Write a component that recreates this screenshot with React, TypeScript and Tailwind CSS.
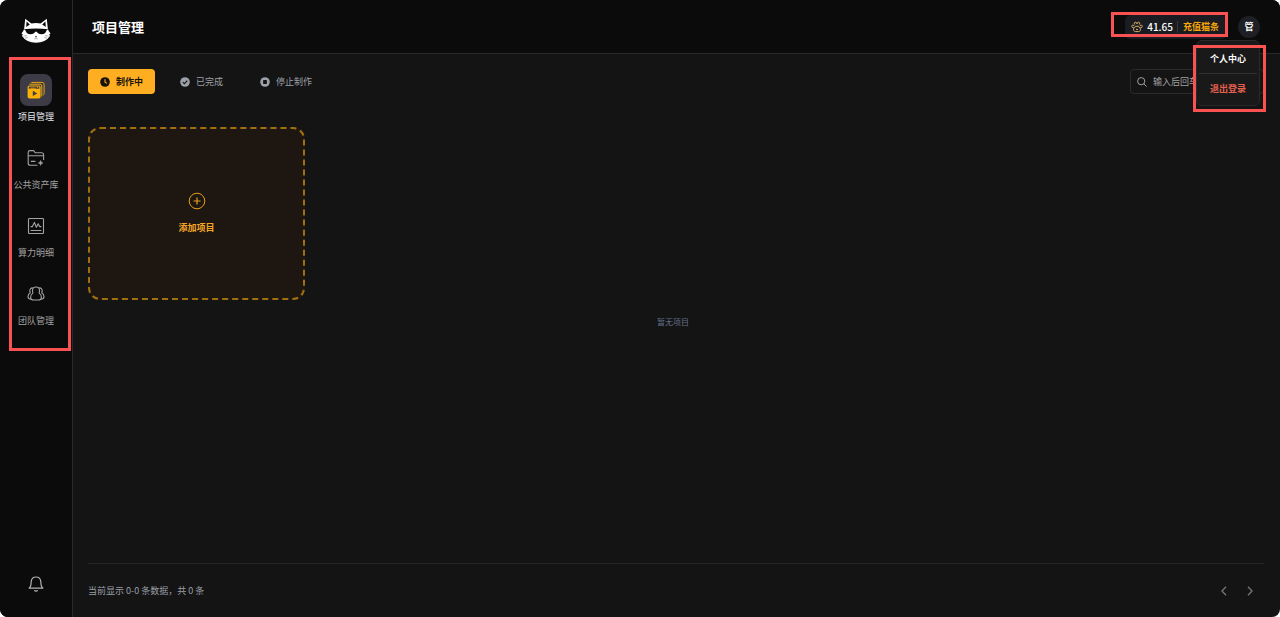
import { useState } from "react";
import type { ReactNode } from "react";

type NavItem = {
  key: string;
  label: string;
  icon: ReactNode;
};

function CatLogo() {
  return (
    <svg width="30" height="26" viewBox="0 0 30 26" fill="none" aria-hidden="true">
      <path
        d="M4.2.8 10.4 5.6Q15 4.6 19.600 5.600L25.800.8 26.800 10.500Q27.200 13 29.600 15.400L28.200 16.200 29 18Q24.500 24.800 15 24.800 5.500 24.800 1 18L1.800 16.200.4 15.400Q2.800 13 3.200 10.500Z"
        fill="#fff"
      />
      <path d="M5.600 3.600 8.800 6.400 5.200 9ZM24.400 3.600 21.200 6.400 24.800 9Z" fill="#0b0b0b" />
      <path
        d="M2.800 11.200Q15 9.600 27.200 11.200L25.400 12.600Q24.800 16.200 20.600 16.200 16.800 16 15.800 13.800H14.200Q13.200 16 9.400 16.200 5.200 16.200 4.600 12.600Z"
        fill="#0b0b0b"
      />
      <path d="M14 18h2l-1 1.200Z" fill="#0b0b0b" />
      <path d="M15 19v1.200M13.400 21q1 .2 1.600-.8.6 1 1.600.8" stroke="#555" strokeWidth=".5" />
      <path d="M2.400 18.200 6 17.600M4 20.200l3-1M27.600 18.200 24 17.600M26 20.200l-3-1" stroke="#666" strokeWidth=".5" />
    </svg>
  );
}

function ProjectIcon() {
  return (
    <svg width="18" height="18" viewBox="0 0 18 18" fill="none" aria-hidden="true">
      <path d="M4.400 1.400h10.800q1.900 0 1.900 1.900v9.200q0 1-1 1.600" stroke="#e6a410" />
      <path d="M2.400 3.200h10.600q1.800 0 1.800 1.800v10.400" stroke="#e6a410" />
      <rect x=".6" y="4.400" width="13" height="13.200" rx="1.800" fill="#fab005" />
      <rect x="1.800" y="5.600" width="10.600" height="2.200" rx=".5" fill="#3d3c46" />
      <path d="M3.200 7.200h5.400M10 6.900l1.200-.8" stroke="#fab005" strokeWidth=".8" />
      <path d="M5.800 9.800v5.200l4.400-2.600Z" fill="#3d3c46" />
    </svg>
  );
}

function AssetIcon() {
  return (
    <svg width="18" height="18" viewBox="0 0 18 18" fill="none" stroke="#a3a3a3" strokeWidth="1.1" aria-hidden="true">
      <path d="M10.400 16.200H3.200q-2 0-2-2V3.400q0-1.800 1.800-1.800h3q.8 0 1.200.7l.9 1.500h6.500q2 0 2 2V11" />
      <path d="M1.200 6.800h15.400M3.800 12.400h4.600" />
      <path d="M13.600 11.400q.3 2.200 2.400 2.500-2.100.3-2.400 2.500-.3-2.200-2.400-2.500 2.100-.3 2.400-2.500Z" fill="#a3a3a3" strokeWidth=".5" />
    </svg>
  );
}

function UsageIcon() {
  return (
    <svg width="18" height="18" viewBox="0 0 18 18" fill="none" stroke="#a3a3a3" strokeWidth="1.1" aria-hidden="true">
      <rect x="1.500" y="1.500" width="15" height="15" rx=".8" />
      <path d="M3.600 9.600h1.800L7.400 5.400l2 4.800 1.800-3.400 1.400 2.800h1.800M3.600 13.500h10.800" strokeLinejoin="round" />
    </svg>
  );
}

function TeamIcon() {
  return (
    <svg width="18" height="18" viewBox="0 0 18 18" fill="none" stroke="#a3a3a3" strokeWidth="1.1" strokeLinejoin="round" aria-hidden="true">
      <path d="M9 2c2.100 0 3.500 1.500 3.500 3.500 0 1.300-.4 2-.4 2.600C13.500 9 14.400 10.500 14.400 12.200c0 2-1.200 2.800-3 2.800H6.600c-1.800 0-3-.8-3-2.800C3.600 10.500 4.500 9 5.900 8.100 5.900 7.500 5.500 6.800 5.500 5.500 5.500 3.500 6.900 2 9 2Z" />
      <path d="M5.800 2.900C4 2.600 2.800 4 2.800 5.700c0 1 .4 1.500.4 2.100C1.800 8.800 1 10.200 1 11.700c0 1.700 1.100 2.500 3.200 2.500M12.200 2.900c1.800-.3 3 1.100 3 2.800 0 1-.4 1.500-.4 2.100 1.400 1 2.200 2.400 2.200 3.900 0 1.700-1.100 2.500-3.200 2.500" />
    </svg>
  );
}

function BellIcon() {
  return (
    <svg width="16" height="18" viewBox="0 0 16 18" fill="none" stroke="#b4b4b4" strokeWidth="1.200" strokeLinejoin="round" aria-hidden="true">
      <path d="M8 2q4.400 0 4.800 4.600l.3 3.400q.2 1.400 1.700 3.200H1.200q1.500-1.800 1.700-3.200l.3-3.400Q3.600 2 8 2Z" />
      <path d="M6.200 15.600q1.800 1.200 3.600 0" />
    </svg>
  );
}

function PawIcon() {
  return (
    <svg width="12" height="12" viewBox="0 0 12 12" fill="none" stroke="#d8b36a" aria-hidden="true">
      <path d="M4.200 3.600C2.900 3.200 3 1.200 4.400 1.200 5.300 1.200 6 2 6 3c0-1 .7-1.800 1.600-1.800C9 1.200 9.100 3.200 7.800 3.600" />
      <path d="M2.800 6.800C1.400 6.900.4 5.800.8 4.800 1.300 3.700 3 4 3.500 5.200M9.200 6.800c1.400.1 2.400-1 2-2C10.700 3.700 9 4 8.500 5.200" />
      <path d="M6 5.200c1.700 0 3.500 1.700 3.500 3.400 0 1.300-1.100 2-2.100 2H4.600c-1 0-2.100-.7-2.100-2C2.500 6.900 4.300 5.200 6 5.200Z" />
      <path d="M5 8.400h2" />
    </svg>
  );
}

const navItems: NavItem[] = [
  { key: "project", label: "项目管理", icon: <ProjectIcon /> },
  { key: "asset", label: "公共资产库", icon: <AssetIcon /> },
  { key: "usage", label: "算力明细", icon: <UsageIcon /> },
  { key: "team", label: "团队管理", icon: <TeamIcon /> },
];

const tabs = [
  {
    key: "doing",
    label: "制作中",
    icon: (
      <svg width="10" height="10" viewBox="0 0 10 10" fill="none" aria-hidden="true">
        <circle cx="5" cy="5" r="4.800" fill="#17120a" />
        <path d="M5 2.200V5.200l2 1.200" stroke="#ffae22" strokeWidth="1.100" />
      </svg>
    ),
  },
  {
    key: "done",
    label: "已完成",
    icon: (
      <svg width="10" height="10" viewBox="0 0 10 10" fill="none" aria-hidden="true">
        <circle cx="5" cy="5" r="4.800" fill="#9ca0a8" />
        <path d="m2.800 5.200 1.600 1.500 2.900-3" stroke="#141414" strokeWidth="1.100" />
      </svg>
    ),
  },
  {
    key: "stopped",
    label: "停止制作",
    icon: (
      <svg width="10" height="10" viewBox="0 0 10 10" aria-hidden="true">
        <circle cx="5" cy="5" r="4.800" fill="#9ca0a8" />
        <rect x="3.100" y="3.100" width="3.800" height="3.800" rx=".6" fill="#141414" />
      </svg>
    ),
  },
];

export default function App() {
  const [nav, setNav] = useState("project");
  const [tab, setTab] = useState("doing");
  const [keyword, setKeyword] = useState("");

  return (
    <div className="min-h-screen flex bg-white font-['Noto_Sans_CJK_SC',sans-serif] text-[9px]">
      <div className="relative flex flex-1 rounded-lg overflow-hidden bg-[#141414]">
        <aside className="relative w-[73px] shrink-0 flex flex-col items-center bg-[#0b0b0b] border-r border-[#2a2a2e]">
          <a href="#" aria-label="首页" className="mt-[18px] mb-[30px]">
            <CatLogo />
          </a>
          <nav className="flex flex-col gap-3.5">
            {navItems.map((item) => (
              <button
                key={item.key}
                type="button"
                onClick={() => setNav(item.key)}
                className={`flex flex-col items-center ${nav === item.key ? "text-gray-200" : "text-neutral-400"}`}
              >
                <span
                  className={`size-8 rounded-lg flex items-center justify-center ${
                    nav === item.key ? "bg-[#3d3c46]" : ""
                  }`}
                >
                  {item.icon}
                </span>
                <span className="leading-[22px]">{item.label}</span>
              </button>
            ))}
          </nav>
          <button type="button" aria-label="通知" className="mt-auto mb-6">
            <BellIcon />
          </button>
          <div className="absolute left-[9px] top-[57px] w-[62px] h-[294px] border-3 border-[#fa5252] pointer-events-none" />
        </aside>

        <div className="flex-1 min-w-0 flex flex-col">
          <header className="relative h-[54px] shrink-0 flex items-center justify-between pl-[19px] pr-5 bg-[#0b0b0b] border-b border-[#2a2a2e]">
            <h1 className="text-[13px] leading-5 font-bold text-white">项目管理</h1>
            <div className="flex items-center gap-[11px]">
              <div className="h-6 flex items-center rounded-md bg-[#1b1c21] pl-1.5 pr-2">
                <PawIcon />
                <span className="ml-1 text-[10px] font-medium text-white">41.65</span>
                <span className="ml-1 mr-[5px] w-px h-3 bg-[#36373c]" />
                <a href="#" className="font-bold text-[#f5a70a]">
                  充值猫条
                </a>
              </div>
              <button
                type="button"
                className="size-[22px] rounded-full bg-[#1f2026] text-white font-bold flex items-center justify-center"
              >
                管
              </button>
            </div>

            {/* 用户下拉菜单 */}
            <div className="absolute z-10 right-5 top-10 w-16 pt-1 pb-0.5 flex flex-col rounded-md bg-[#191919] border border-[#29292b]">
              <button type="button" className="h-7 font-bold text-white">
                个人中心
              </button>
              <div className="mx-0.5 h-px bg-[#313133]" />
              <button type="button" className="h-[29px] font-bold text-[#e5604f]">
                退出登录
              </button>
            </div>
            <div className="absolute z-20 right-[52px] top-3 w-[117px] h-[25px] border-3 border-[#fa5252] pointer-events-none" />
            <div className="absolute z-20 right-[14px] top-[45px] w-[73px] h-[67px] border-3 border-[#fa5252] pointer-events-none" />
          </header>

          <main className="flex-1 flex flex-col pl-[15px] pr-4 pt-[15px]">
            <div className="flex items-center justify-between">
              <div className="flex gap-[13px]">
                {tabs.map((t) => (
                  <button
                    key={t.key}
                    type="button"
                    onClick={() => setTab(t.key)}
                    className={`h-[25px] px-3 flex items-center gap-1.5 rounded ${
                      tab === t.key ? "bg-[#ffae22] text-[#17120a] font-bold" : "text-[#9ca0a8]"
                    }`}
                  >
                    {t.icon}
                    {t.label}
                  </button>
                ))}
              </div>
              <label className="w-[134px] h-[25px] flex items-center gap-1.5 px-1.5 rounded border border-[#2b2b2d]">
                <svg width="10" height="10" viewBox="0 0 10 10" fill="none" stroke="#a3a3a3" className="shrink-0" aria-hidden="true">
                  <circle cx="4.200" cy="4.200" r="3.600" />
                  <path d="m6.900 6.900 2.700 2.700" />
                </svg>
                <input
                  type="text"
                  aria-label="搜索项目"
                  value={keyword}
                  onChange={(e) => setKeyword(e.target.value)}
                  placeholder="输入后回车搜索"
                  className="w-full min-w-0 bg-transparent outline-none text-gray-200 placeholder:text-neutral-400"
                />
              </label>
            </div>

            <div className="flex-1 mt-[33px] pr-1.5">
              <button
                type="button"
                className="w-[217px] h-[173px] pt-0.5 flex flex-col items-center justify-center gap-2 rounded-xl border-2 border-dashed border-[#a0700f] bg-[#1e1711] text-[#f5a623] font-bold"
              >
                <svg width="18" height="18" viewBox="0 0 18 18" fill="none" stroke="#e69c1c" aria-hidden="true">
                  <circle cx="9" cy="9" r="7.800" />
                  <path d="M9 5.500v7M5.500 9h7" strokeWidth="1.200" />
                </svg>
                <span className="leading-5">添加项目</span>
              </button>
              <p className="mt-4 text-center text-[8px] leading-3 text-[#64708a]">暂无项目</p>
            </div>

            <footer className="h-[54px] pt-px flex items-center justify-between border-t border-[#262628] text-[#9a9ea6]">
              <span>当前显示 0-0 条数据，共 0 条</span>
              <div className="flex gap-2 pr-[5px]">
                <button type="button" aria-label="上一页" className="size-[18px] flex items-center justify-center">
                  <svg width="8" height="10" viewBox="0 0 8 10" fill="none" stroke="#737373" strokeWidth="1.400" aria-hidden="true">
                    <path d="M6 .8 2 5l4 4.200" />
                  </svg>
                </button>
                <button type="button" aria-label="下一页" className="size-[18px] flex items-center justify-center">
                  <svg width="8" height="10" viewBox="0 0 8 10" fill="none" stroke="#737373" strokeWidth="1.400" aria-hidden="true">
                    <path d="M2 .8 6 5 2 9.200" />
                  </svg>
                </button>
              </div>
            </footer>
          </main>
        </div>
      </div>
    </div>
  );
}
